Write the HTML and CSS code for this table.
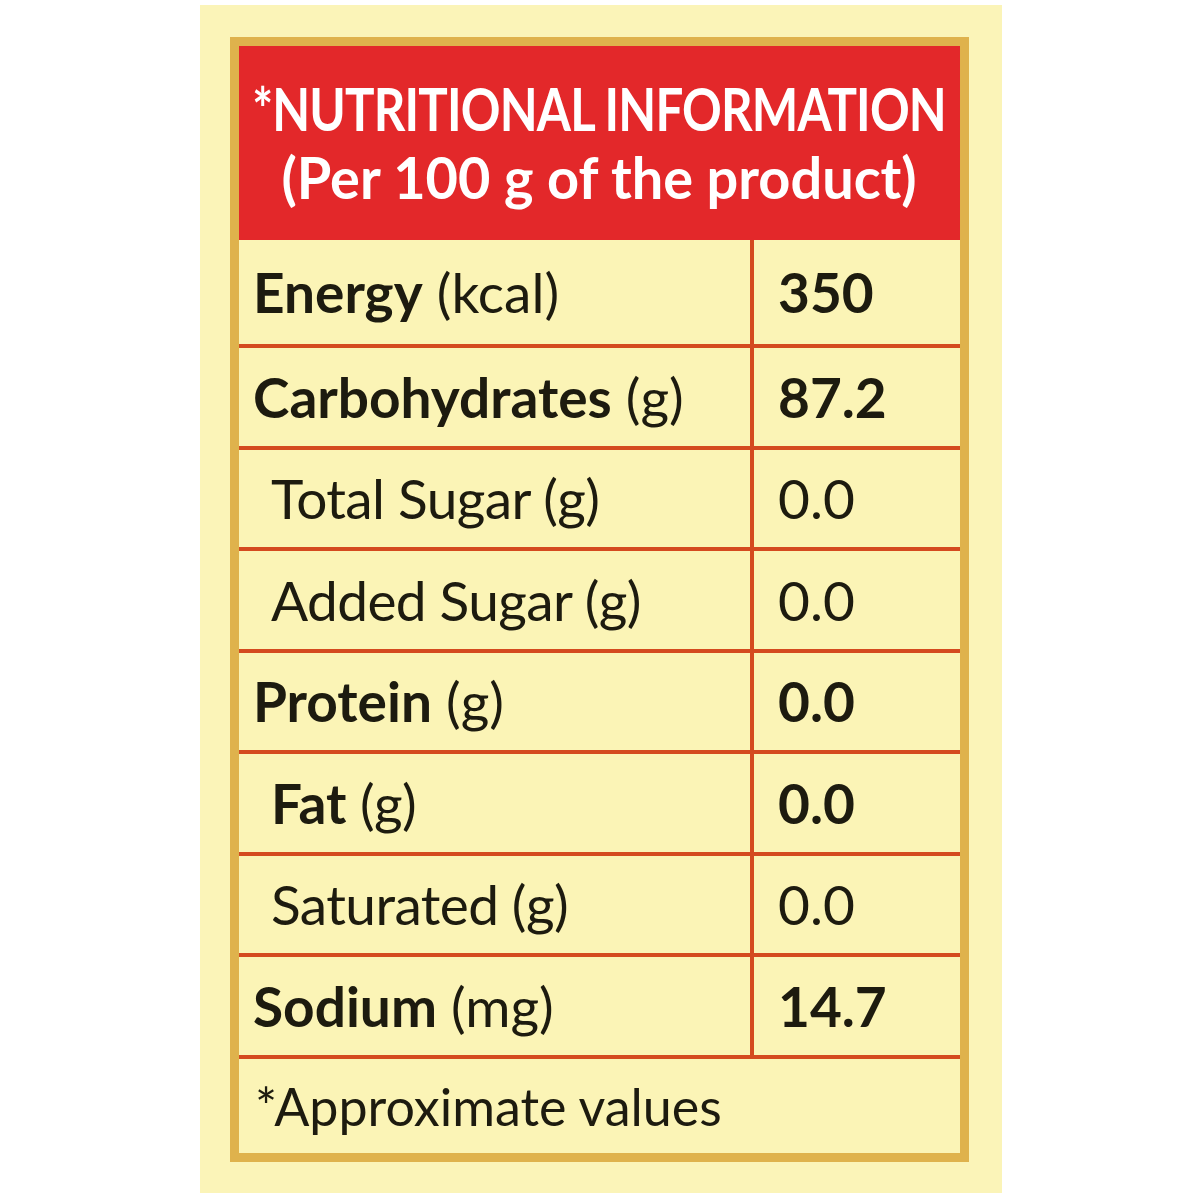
FILE: index.html
```html
<!DOCTYPE html>
<html>
<head>
<meta charset="utf-8">
<link rel="stylesheet" href="styles.css">
</head>
<body>
<div class="panel">
  <div class="frame">
    <div class="header">
      <div class="h1"><span>*NUTRITIONAL INFORMATION</span></div>
      <div class="h2"><span>(Per 100 g of the product)</span></div>
    </div>
    <div class="table">
      <div class="row first">
        <div class="label"><span><b>Energy</b> (kcal)</span></div>
        <div class="value"><b>350</b></div>
      </div>
      <div class="row">
        <div class="label"><span><b>Carbohydrates</b> (g)</span></div>
        <div class="value"><b>87.2</b></div>
      </div>
      <div class="row">
        <div class="label sub"><span>Total Sugar (g)</span></div>
        <div class="value">0.0</div>
      </div>
      <div class="row">
        <div class="label sub"><span>Added Sugar (g)</span></div>
        <div class="value">0.0</div>
      </div>
      <div class="row">
        <div class="label"><span><b>Protein</b> (g)</span></div>
        <div class="value"><b>0.0</b></div>
      </div>
      <div class="row">
        <div class="label sub"><span><b>Fat</b> (g)</span></div>
        <div class="value"><b>0.0</b></div>
      </div>
      <div class="row">
        <div class="label sub"><span>Saturated (g)</span></div>
        <div class="value">0.0</div>
      </div>
      <div class="row">
        <div class="label"><span><b>Sodium</b> (mg)</span></div>
        <div class="value"><b>14.7</b></div>
      </div>
      <div class="footer">*Approximate values</div>
    </div>
  </div>
</div>
</body>
</html>
```

FILE: styles.css
```css
html, body {
  margin: 0;
  padding: 0;
  background: #ffffff;
}

body {
  font-family: "Lato", "Liberation Sans", sans-serif;
  color: #1d1b0f;
}

.panel {
  margin: 5px 0 0 200px;
  width: 802px;
  height: 1188px;
  box-sizing: border-box;
  padding: 32px 33px 31px 30px;
  background: #fbf4b8;
}

.frame {
  height: 100%;
  box-sizing: border-box;
  border: 9px solid #dfb24c;
  background: #fbf4b6;
  display: flex;
  flex-direction: column;
}

.header {
  height: 194px;
  background: #e3282a;
  color: #ffffff;
  display: flex;
  flex-direction: column;
  align-items: center;
  justify-content: center;
  font-weight: 700;
  text-align: center;
  padding-bottom: 4px;
  box-sizing: border-box;
}

.h1 {
  font-size: 60px;
  line-height: 72px;
  letter-spacing: -1px;
}

.h2 {
  font-size: 57px;
  line-height: 66px;
}

.h1 span, .h2 span {
  display: inline-block;
  white-space: nowrap;
}

.h1 span {
  transform: scaleX(0.82);
}

.h2 span {
  transform: scaleX(0.98);
}

.table {
  flex: 1;
  display: grid;
  grid-template-rows: 108px repeat(7, 101.5px) 1fr;
}

.row {
  display: grid;
  grid-template-columns: 515px 1fr;
  border-bottom: 4px solid #d44a1f;
}

.label, .value {
  display: flex;
  align-items: center;
  font-size: 55px;
  white-space: nowrap;
}

.label {
  border-right: 4px solid #d44a1f;
  padding-left: 14px;
}

.label.sub {
  padding-left: 32px;
  letter-spacing: -0.6px;
}

.value {
  padding-left: 24px;
}

b {
  font-weight: 700;
  letter-spacing: 0;
}

.footer {
  display: flex;
  align-items: center;
  padding-left: 16px;
  font-size: 52px;
}
```
